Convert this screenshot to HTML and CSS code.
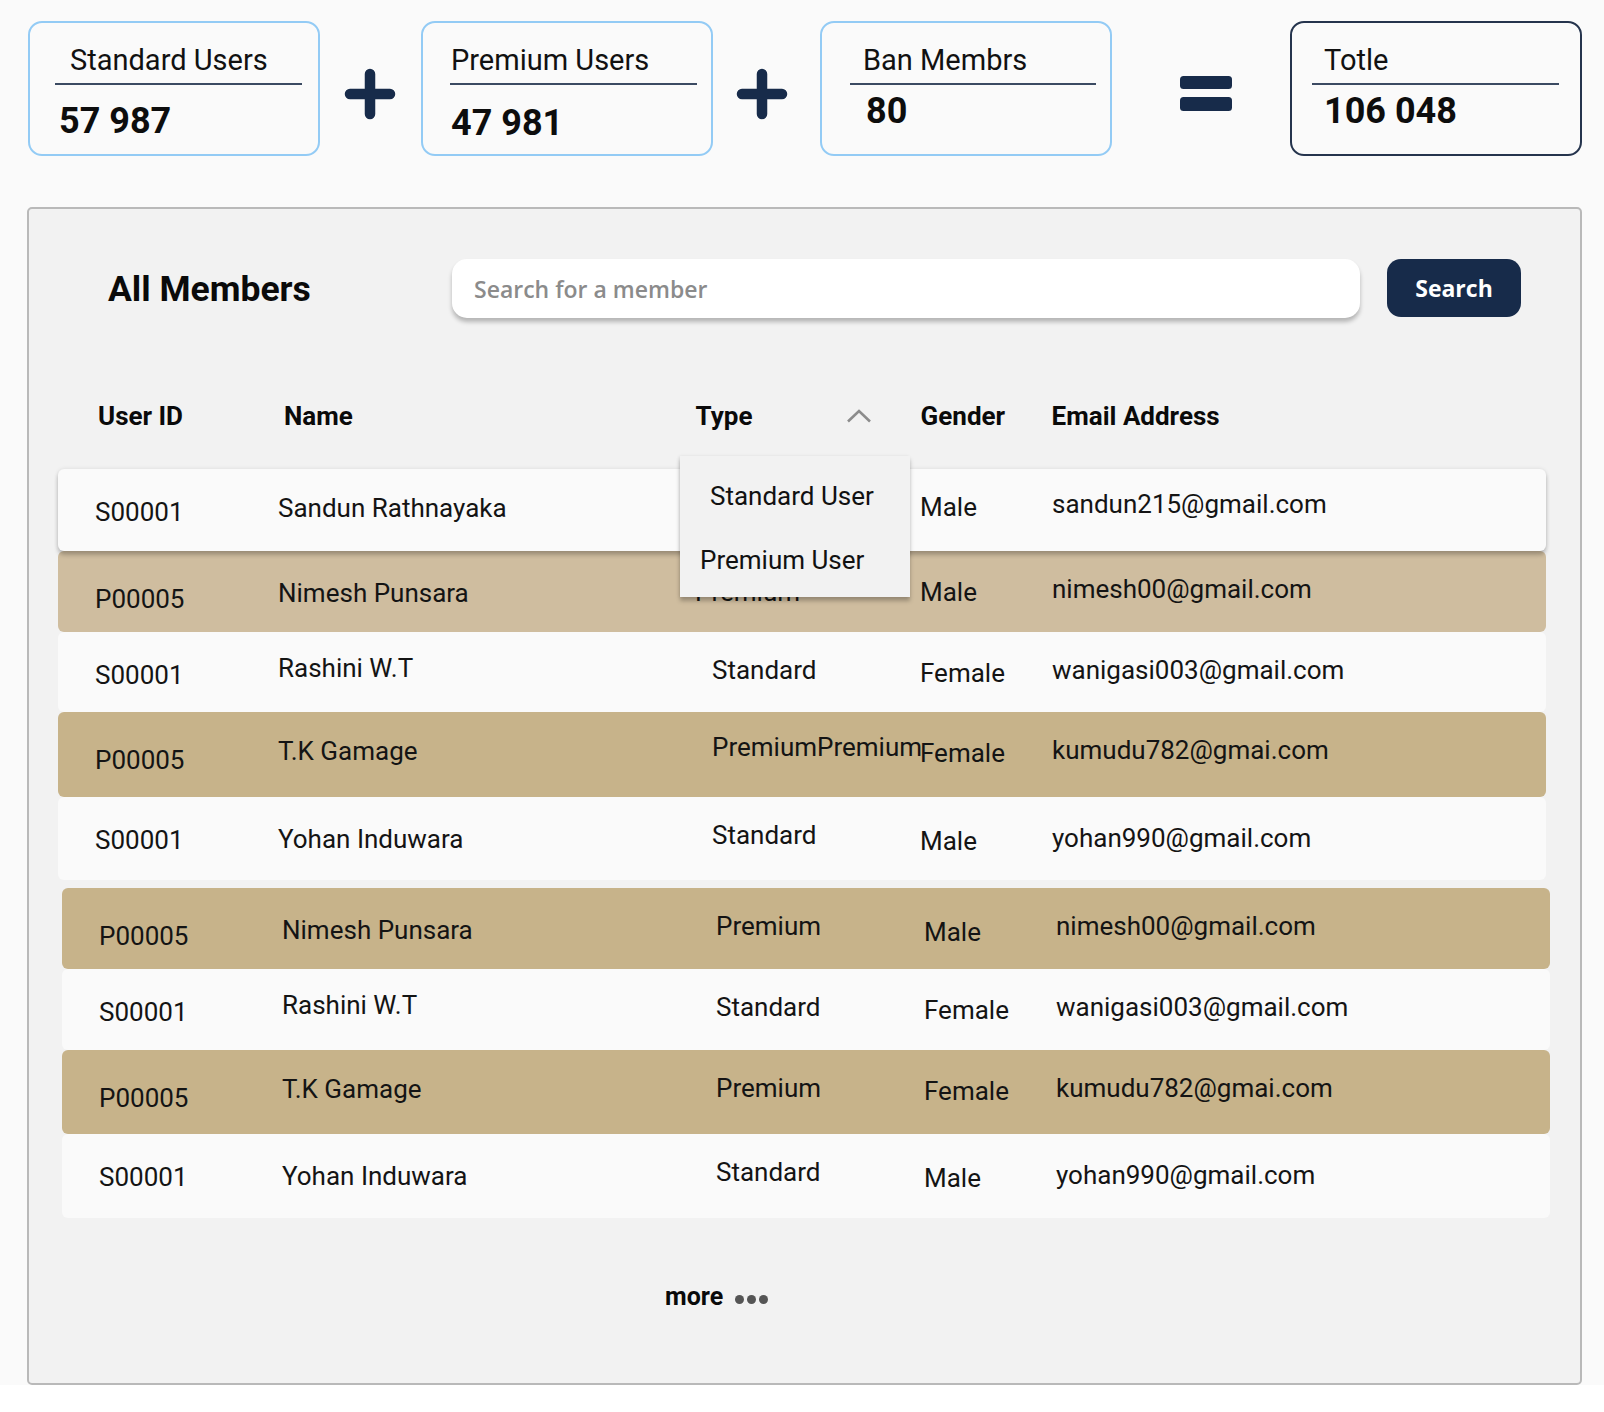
FILE: index.html
```html
<!DOCTYPE html>
<html lang="en">
<head>
<meta charset="utf-8">
<title>All Members</title>
<link rel="stylesheet" href="styles.css">
</head>
<body>
<div class="page">
  <div class="stats">
    <div class="card card-std">
      <div class="card-title">Standard Users</div>
      <div class="card-value">57 987</div>
    </div>
    <div class="op op-1">
      <svg class="plus" viewBox="0 0 52 52" width="52" height="52"><path d="M6 26H46M26 6V46" stroke="#172b4a" stroke-width="10.5" stroke-linecap="round" fill="none"/></svg>
    </div>
    <div class="card card-prem">
      <div class="card-title">Premium Users</div>
      <div class="card-value">47 981</div>
    </div>
    <div class="op op-2">
      <svg class="plus" viewBox="0 0 52 52" width="52" height="52"><path d="M6 26H46M26 6V46" stroke="#172b4a" stroke-width="10.5" stroke-linecap="round" fill="none"/></svg>
    </div>
    <div class="card card-ban">
      <div class="card-title">Ban Membrs</div>
      <div class="card-value">80</div>
    </div>
    <div class="op op-eq">
      <svg class="equals" viewBox="0 0 52 35" width="52" height="35"><rect x="0" y="0" width="52" height="13" rx="3.5" fill="#172b4a"/><rect x="0" y="21" width="52" height="14" rx="3.5" fill="#172b4a"/></svg>
    </div>
    <div class="card card-total">
      <div class="card-title">Totle</div>
      <div class="card-value">106 048</div>
    </div>
  </div>

  <section class="panel">
    <div class="panel-head">
      <h2 class="panel-title">All Members</h2>
      <input class="search-input" type="text" placeholder="Search for a member">
      <button class="search-btn" type="button">Search</button>
    </div>

    <div class="table">
      <div class="thead">
        <div class="th th-id">User ID</div>
        <div class="th th-name">Name</div>
        <div class="th th-type">Type
          <svg class="chev" viewBox="0 0 26 14" width="26" height="14"><path d="M2 12.5L13 2L24 12.5" stroke="#8c8c8c" stroke-width="2.6" fill="none"/></svg>
        </div>
        <div class="th th-gender">Gender</div>
        <div class="th th-email">Email Address</div>
      </div>

      <div class="dropdown">
        <div class="dd-item dd-std">Standard User</div>
        <div class="dd-item dd-prem">Premium User</div>
      </div>

      <div class="row row-s row-first h82">
        <div class="c c-id">S00001</div>
        <div class="c c-name">Sandun Rathnayaka</div>
        <div class="c c-type"></div>
        <div class="c c-gender hi">Male</div>
        <div class="c c-email hi">sandun215@gmail.com</div>
      </div>
      <div class="row row-p row-light">
        <div class="c c-id">P00005</div>
        <div class="c c-name lo">Nimesh Punsara</div>
        <div class="c c-type lo shift-l">Premium</div>
        <div class="c c-gender">Male</div>
        <div class="c c-email">nimesh00@gmail.com</div>
      </div>
      <div class="row row-s h80">
        <div class="c c-id">S00001</div>
        <div class="c c-name hi">Rashini W.T</div>
        <div class="c c-type">Standard</div>
        <div class="c c-gender">Female</div>
        <div class="c c-email">wanigasi003@gmail.com</div>
      </div>
      <div class="row row-p h85">
        <div class="c c-id">P00005</div>
        <div class="c c-name">T.K Gamage</div>
        <div class="c c-type hi">PremiumPremium</div>
        <div class="c c-gender">Female</div>
        <div class="c c-email">kumudu782@gmai.com</div>
      </div>
      <div class="row row-s h83">
        <div class="c c-id">S00001</div>
        <div class="c c-name lo">Yohan Induwara</div>
        <div class="c c-type">Standard</div>
        <div class="c c-gender lo">Male</div>
        <div class="c c-email lo">yohan990@gmail.com</div>
      </div>
      <div class="row row-p row-shift row-gap">
        <div class="c c-id">P00005</div>
        <div class="c c-name lo">Nimesh Punsara</div>
        <div class="c c-type">Premium</div>
        <div class="c c-gender lo">Male</div>
        <div class="c c-email">nimesh00@gmail.com</div>
      </div>
      <div class="row row-s row-shift">
        <div class="c c-id">S00001</div>
        <div class="c c-name hi">Rashini W.T</div>
        <div class="c c-type">Standard</div>
        <div class="c c-gender">Female</div>
        <div class="c c-email">wanigasi003@gmail.com</div>
      </div>
      <div class="row row-p row-shift h84">
        <div class="c c-id">P00005</div>
        <div class="c c-name">T.K Gamage</div>
        <div class="c c-type">Premium</div>
        <div class="c c-gender">Female</div>
        <div class="c c-email">kumudu782@gmai.com</div>
      </div>
      <div class="row row-s row-shift h84">
        <div class="c c-id">S00001</div>
        <div class="c c-name lo">Yohan Induwara</div>
        <div class="c c-type">Standard</div>
        <div class="c c-gender lo">Male</div>
        <div class="c c-email lo">yohan990@gmail.com</div>
      </div>
    </div>

    <div class="more">
      <span class="more-text">more</span>
      <span class="dots"><i></i><i></i><i></i></span>
    </div>
  </section>
</div>
</body>
</html>
```

FILE: styles.css
```css
* { box-sizing: border-box; }

html, body {
  margin: 0;
  padding: 0;
  background: #ffffff;
  font-family: Roboto, "Liberation Sans", Arial, sans-serif;
  color: #111111;
}

.page {
  background: #fafafa;
  padding: 21px 0 0 27px;
  width: 1604px;
}

/* ---------- stats ---------- */
.stats {
  display: flex;
  align-items: flex-start;
  margin-left: 1px;
  height: 135px;
}

.card {
  flex: 0 0 292px;
  height: 135px;
  border: 2px solid #93cbf5;
  border-radius: 14px;
  background: #fafafa;
  padding-top: 21px;
}

.card-title {
  font-size: 29px;
  line-height: 33px;
  font-weight: 400;
  color: #111;
  padding-bottom: 6px;
  border-bottom: 2px solid #3b4a62;
  white-space: nowrap;
}

.card-value {
  font-size: 36px;
  line-height: 41px;
  font-weight: 700;
  color: #0d0d0d;
}

.card-std { padding-left: 25px; padding-right: 16px; }
.card-std .card-title { padding-left: 15px; }
.card-std .card-value { padding-left: 4px; margin-top: 16px; }

.card-prem { padding-left: 27px; padding-right: 14px; }
.card-prem .card-title { padding-left: 1px; }
.card-prem .card-value { padding-left: 1px; margin-top: 18px; }

.card-ban { padding-left: 28px; padding-right: 14px; }
.card-ban .card-title { padding-left: 13px; }
.card-ban .card-value { padding-left: 16px; margin-top: 6px; }

.card-total {
  border-color: #25344d;
  padding-left: 20px;
  padding-right: 21px;
}
.card-total .card-title { padding-left: 12px; }
.card-total .card-value { padding-left: 12px; margin-top: 6px; }

.op {
  display: flex;
  justify-content: center;
  align-items: flex-start;
  height: 135px;
}
.op-1 { flex: 0 0 101px; padding-top: 47px; padding-right: 2px; }
.op-2 { flex: 0 0 107px; padding-top: 47px; padding-right: 10px; }
.op-eq { flex: 0 0 178px; padding-top: 55px; padding-left: 10px; }
.plus, .equals { display: block; }

/* ---------- panel ---------- */
.panel {
  margin-top: 51px;
  width: 1555px;
  height: 1178px;
  background: #f2f2f2;
  border: 2px solid #b9b9b9;
  border-radius: 5px;
  position: relative;
}

.panel-head {
  display: flex;
  align-items: center;
  padding: 50px 0 0 79px;
}

.panel-title {
  flex: 0 0 344px;
  margin: 0;
  font-size: 35.5px;
  line-height: 41px;
  font-weight: 700;
  color: #0a0a0a;
  padding-top: 1px;
}

.search-input {
  flex: 0 0 908px;
  height: 59px;
  border: none;
  outline: none;
  border-radius: 15px;
  background: #ffffff;
  box-shadow: 0 4px 4px rgba(0, 0, 0, 0.25);
  padding: 0 0 0 22px;
  font-family: "Open Sans", "Liberation Sans", sans-serif;
  font-size: 23px;
  font-weight: 600;
  color: #333;
}
.search-input::placeholder { color: #8b8b8b; opacity: 1; }

.search-btn {
  margin-left: 27px;
  flex: 0 0 134px;
  height: 58px;
  margin-top: -2px;
  border: none;
  border-radius: 14px;
  background: #172b4a;
  color: #ffffff;
  font-family: "Open Sans", "Liberation Sans", sans-serif;
  font-size: 23px;
  font-weight: 700;
  padding: 0;
}

/* ---------- table ---------- */
.table {
  position: relative;
  margin: 83px 0 0 29px;
  width: 1488px;
}

.thead {
  display: grid;
  grid-template-columns: 186px 411.6px 225px 131px 1fr;
  padding-left: 40px;
  height: 30px;
  margin-bottom: 38px;
}

.th {
  font-size: 26px;
  line-height: 30px;
  font-weight: 700;
  color: #0a0a0a;
  white-space: nowrap;
}

.th-type {
  display: flex;
  align-items: flex-start;
  padding-right: 49px;
}
.chev {
  display: block;
  margin-left: auto;
  margin-top: 8px;
}

.dropdown {
  position: absolute;
  left: 622px;
  top: 55px;
  width: 230px;
  height: 141px;
  background: #f2f2f2;
  box-shadow: 0 4px 4px rgba(0, 0, 0, 0.25), -1px 0 3px rgba(0, 0, 0, 0.08);
  z-index: 5;
  padding-top: 25px;
}
.dd-item {
  font-size: 26px;
  line-height: 30px;
  color: #111;
  white-space: nowrap;
}
.dd-std { padding-left: 30px; }
.dd-prem { padding-left: 20px; margin-top: 34px; }

.row {
  display: grid;
  grid-template-columns: 183px 434px 208px 132px 1fr;
  align-items: start;
  padding-left: 37px;
  height: 81px;
  border-radius: 6px;
  position: relative;
}

.row-s { background: #fafafa; }
.row-p { background: #c7b38a; }
.row-light { background: #cfbd9f; }

.row-first {
  z-index: 2;
  box-shadow: 0 4px 4px rgba(0, 0, 0, 0.22), 0 0 4px rgba(0, 0, 0, 0.1);
}

.row-shift { margin-left: 4px; margin-right: -4px; }
.row-gap { margin-top: 8px; }

.h80 { height: 80px; }
.h82 { height: 82px; }
.h83 { height: 83px; }
.h84 { height: 84px; }
.h85 { height: 85px; }

.c {
  font-size: 26px;
  line-height: 30px;
  font-weight: 400;
  color: #141414;
  white-space: nowrap;
}

.c-id { padding-top: 28px; }
.row-p .c-id { padding-top: 33px; }
.c-name { padding-top: 24px; }
.c-type { padding-top: 23px; }
.c-gender { padding-top: 26px; }
.c-email { padding-top: 23px; }

.lo { margin-top: 3px; }
.hi { margin-top: -3px; }
.shift-l { margin-left: -17px; }

/* ---------- more ---------- */
.more {
  display: flex;
  align-items: center;
  margin-top: 64px;
  padding-left: 636px;
  height: 30px;
}
.more-text {
  font-size: 25px;
  line-height: 30px;
  font-weight: 700;
  color: #0a0a0a;
}
.dots {
  display: flex;
  gap: 3px;
  margin-left: 12px;
  margin-top: 4px;
}
.dots i {
  display: block;
  width: 9px;
  height: 9px;
  border-radius: 50%;
  background: #555555;
}
```
